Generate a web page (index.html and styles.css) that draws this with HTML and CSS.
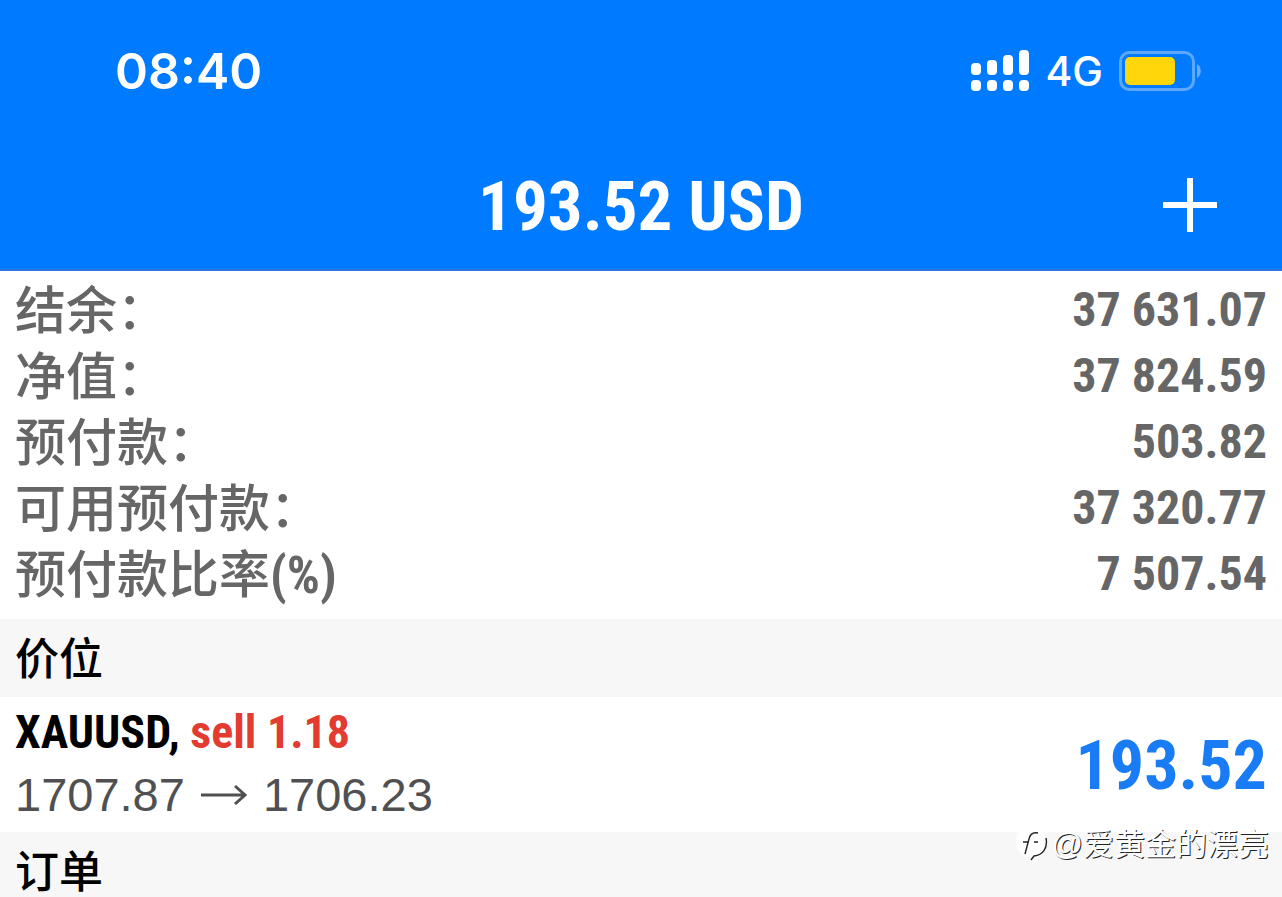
FILE: index.html
```html
<!DOCTYPE html>
<html lang="zh-CN">
<head>
<meta charset="utf-8">
<meta name="viewport" content="width=device-width, initial-scale=1">
<title>193.52 USD</title>
<link rel="stylesheet" href="styles.css">
</head>
<body>
<header class="header">
  <div class="status">
    <time class="clock">08:40</time>
    <div class="indicators">
      <svg class="signal" width="58" height="41" viewBox="0 0 58 41" aria-hidden="true">
        <g fill="#fff">
          <rect x="0" y="13" width="10" height="12" rx="4"/>
          <rect x="16" y="10" width="10" height="15" rx="4"/>
          <rect x="32" y="5" width="10" height="20" rx="4"/>
          <rect x="48" y="0" width="10" height="25" rx="4"/>
          <rect x="0" y="30" width="10" height="11" rx="4"/>
          <rect x="16" y="30" width="10" height="11" rx="4"/>
          <rect x="32" y="30" width="10" height="11" rx="4"/>
          <rect x="48" y="30" width="10" height="11" rx="4"/>
        </g>
      </svg>
      <span class="network">4G</span>
      <svg class="battery" width="82" height="40" viewBox="0 0 82 40" aria-hidden="true">
        <rect x="1.5" y="1.5" width="73" height="37" rx="9" fill="none" stroke="#5ba8ff" stroke-width="3"/>
        <rect x="6" y="6" width="50" height="28" rx="5" fill="#ffd60a"/>
        <path d="M78 13c5 3 5 11 0 14z" fill="#66adff"/>
      </svg>
    </div>
  </div>
  <div class="nav">
    <h1 class="title">193.52 USD</h1>
    <button class="add" type="button" aria-label="新订单">
      <svg width="54" height="54" viewBox="0 0 54 54" aria-hidden="true"><path d="M27 0v54M0 27h54" stroke="#fff" stroke-width="6"/></svg>
    </button>
  </div>
</header>
<main>
  <dl class="summary">
    <div class="row"><dt>结余：</dt><dd>37 631.07</dd></div>
    <div class="row"><dt>净值：</dt><dd>37 824.59</dd></div>
    <div class="row"><dt>预付款：</dt><dd>503.82</dd></div>
    <div class="row"><dt>可用预付款：</dt><dd>37 320.77</dd></div>
    <div class="row"><dt>预付款比率<span class="unit">(%)</span></dt><dd>7 507.54</dd></div>
  </dl>
  <h2 class="section">价位</h2>
  <div class="position">
    <div>
      <p class="symbol">XAUUSD, <span class="sell">sell 1.18</span></p>
      <p class="prices">1707.87
        <svg width="46" height="22" viewBox="0 0 46 22" role="img" aria-label="至"><path d="M0 11h44M34 2l10 9-10 9" fill="none" stroke="currentColor" stroke-width="3"/></svg>
        1706.23</p>
    </div>
    <strong class="profit">193.52</strong>
  </div>
  <h2 class="section">订单</h2>
</main>
<div class="watermark">
  <svg width="32" height="36" viewBox="0 0 32 36" aria-hidden="true">
    <path d="M15 0C6 0 0 7 0 15c0 7 4 12 8 14l6 1v5c10-4 17-12 17-20C31 6 24 0 15 0z" fill="#fff"/>
    <path d="M30 11c2 10-3 17-12 18l-3 4M9 27l4-15c1-5 4-7 9-6M7 15h5M18 15h4" fill="none" stroke="#222" stroke-width="1.4"/>
  </svg>
  <span>@爱黄金的漂亮</span>
</div>
</body>
</html>
```

FILE: styles.css
```css
* { box-sizing: border-box; }
body, h1, h2, p, dl, dd { margin: 0; }
body {
  position: relative;
  min-height: 100vh;
  overflow: hidden;
  background: #fff;
  color: #000;
  font-family: "Roboto Condensed", "Liberation Sans", "Noto Sans CJK SC", sans-serif;
}
.header {
  background: #007aff;
  border-bottom: 2px solid #2f74de;
  color: #fff;
}
.status {
  display: flex;
  justify-content: space-between;
  align-items: center;
  height: 141px;
  padding: 0 81px 0 115px;
  font-family: Inter, sans-serif;
}
.clock { font-size: 50px; font-weight: 600; }
.indicators { display: flex; align-items: center; gap: 16px; }
.network { font-size: 41px; font-weight: 500; }
.nav {
  display: grid;
  grid-template-columns: 1fr auto 1fr;
  align-items: center;
  min-height: 128px;
  padding: 0 65px;
}
.title {
  grid-column: 2;
  padding-top: 4px;
  font-size: 69px;
  line-height: 84px;
  font-weight: 700;
}
.add {
  display: flex;
  justify-self: end;
  padding: 0;
  border: 0;
  background: none;
}
.summary { padding: 6px 15px 12px; color: #666; font-size: 48px; }
.row {
  display: flex;
  justify-content: space-between;
  align-items: flex-start;
  height: 66px;
  line-height: 66px;
}
.row dt { font-size: 51px; line-height: 70px; font-weight: 500; }
.row dd { font-weight: 700; }
.unit { font-size: 52px; font-weight: 700; }
.section {
  height: 78px;
  padding: 0 15px;
  background: #f7f7f7;
  font-size: 44px;
  line-height: 82px;
  font-weight: 500;
}
.position {
  display: flex;
  justify-content: space-between;
  align-items: center;
  padding: 4px 15px 6px;
}
.symbol { font-size: 46px; line-height: 62px; font-weight: 700; }
.sell { color: #e23b30; }
.prices {
  display: flex;
  align-items: center;
  gap: 16px;
  color: #505052;
  font: 47px/63px "Liberation Sans", sans-serif;
}
.profit { padding-top: 4px; color: #1a7cf5; font-size: 68px; line-height: 84px; }
.watermark {
  position: absolute;
  right: 13px;
  bottom: 26px;
  display: flex;
  align-items: center;
  gap: 4px;
  color: #fff;
  font: 31px/54px "Liberation Sans", "Noto Sans CJK SC", sans-serif;
  text-shadow: 1px 1px 0 #222;
}
.watermark { bottom: 38px; }
```
